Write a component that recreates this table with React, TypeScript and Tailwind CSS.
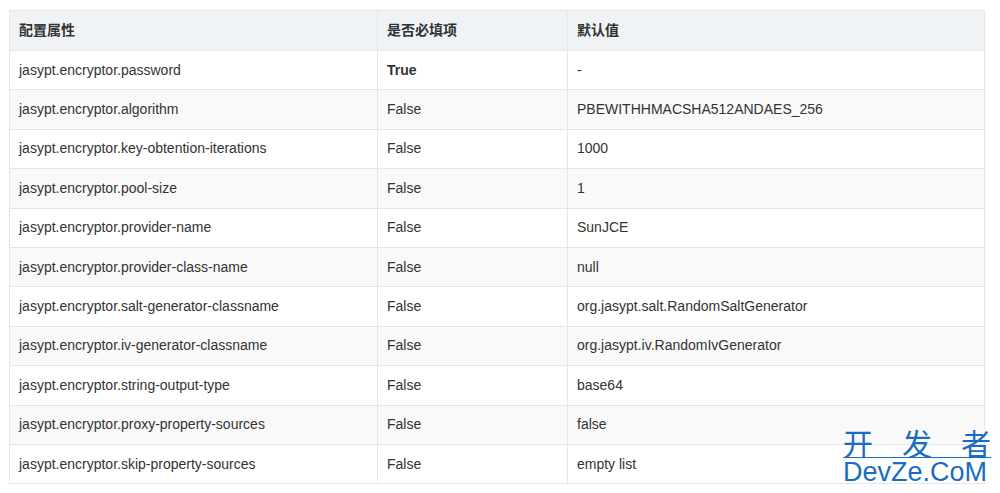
const rows: [string, string, string][] = [
  ["jasypt.encryptor.password", "True", "-"],
  ["jasypt.encryptor.algorithm", "False", "PBEWITHHMACSHA512ANDAES_256"],
  ["jasypt.encryptor.key-obtention-iterations", "False", "1000"],
  ["jasypt.encryptor.pool-size", "False", "1"],
  ["jasypt.encryptor.provider-name", "False", "SunJCE"],
  ["jasypt.encryptor.provider-class-name", "False", "null"],
  ["jasypt.encryptor.salt-generator-classname", "False", "org.jasypt.salt.RandomSaltGenerator"],
  ["jasypt.encryptor.iv-generator-classname", "False", "org.jasypt.iv.RandomIvGenerator"],
  ["jasypt.encryptor.string-output-type", "False", "base64"],
  ["jasypt.encryptor.proxy-property-sources", "False", "false"],
  ["jasypt.encryptor.skip-property-sources", "False", "empty list"],
]

export default function App() {
  return (
    <div className="relative w-[1000px] h-[493px] bg-white pt-[10px] pl-[9px] font-['Liberation_Sans','Noto_Sans_CJK_SC',sans-serif] text-[14px] text-[#333]">
      <table className="w-[976px] border-collapse">
        <thead>
          <tr className="h-[40px] bg-[#f0f3f6]">
            <th className="w-[368px] border border-[#e4e7ea] px-[9px] text-left font-bold">配置属性</th>
            <th className="w-[190px] border border-[#e4e7ea] px-[9px] text-left font-bold">是否必填项</th>
            <th className="border border-[#e4e7ea] px-[9px] text-left font-bold">默认值</th>
          </tr>
        </thead>
        <tbody>
          {rows.map(([k, req, def], i) => (
            <tr key={k} className={i % 2 === 1 ? "h-[39.4px] bg-[#f9f9f9]" : "h-[39.4px] bg-white"}>
              <td className="border border-[#e4e7ea] px-[9px]">{k}</td>
              <td className={req === "True" ? "border border-[#e4e7ea] px-[9px] font-bold" : "border border-[#e4e7ea] px-[9px]"}>{req}</td>
              <td className="border border-[#e4e7ea] px-[9px]">{def}</td>
            </tr>
          ))}
        </tbody>
      </table>

      {/* watermark */}
      <div className="absolute left-[843px] top-[426px] w-[148px] text-[#1a6cc0]">
        <div className="flex h-[32px] items-center justify-between border-b border-[#1a6cc0] text-[30px] leading-none font-['Noto_Sans_CJK_SC',sans-serif]">
          <span>开</span>
          <span>发</span>
          <span>者</span>
        </div>
        <div className="h-[28px] text-[27px] leading-[28px]">DevZe.CoM</div>
      </div>
    </div>
  )
}
